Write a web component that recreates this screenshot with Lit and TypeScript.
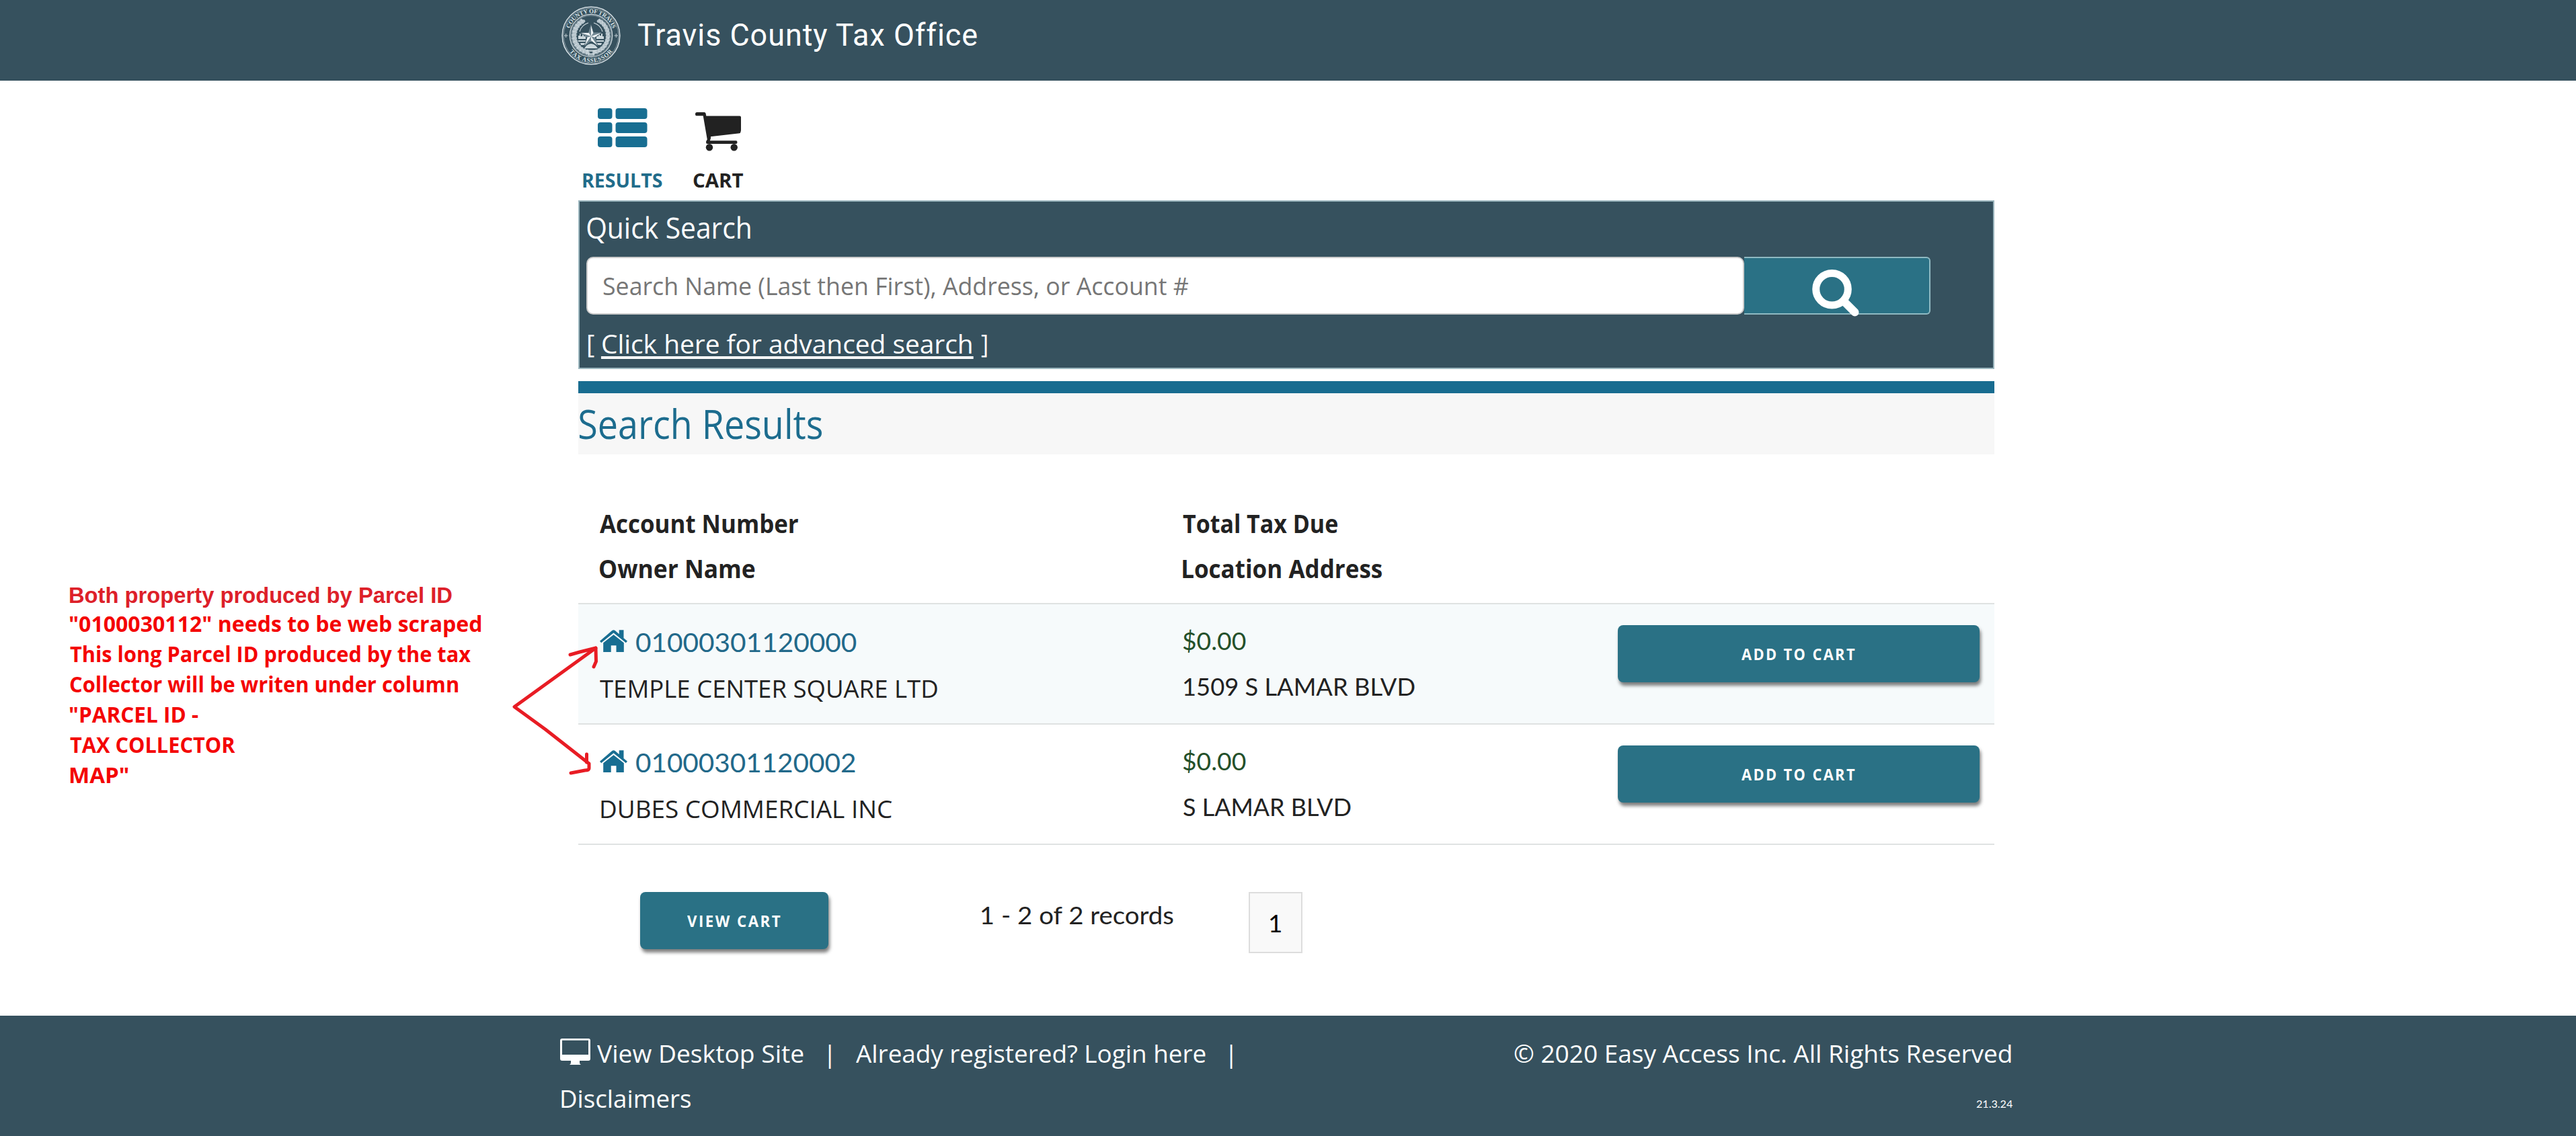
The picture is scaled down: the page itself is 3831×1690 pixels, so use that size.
import { LitElement, html, css, svg } from "lit";
import { customElement, property, query, state } from "lit/decorators.js";
import { styleMap } from "lit/directives/style-map.js";

/** One line of text whose visible ink spans exactly `width` pixels. */
@customElement("fit-text")
class FitText extends LitElement {
  @property() text = "";
  @property({ type: Number }) width = 100;
  @property({ type: Boolean, reflect: true }) underlined = false;
  @state() private scale = 1;
  @state() private shift = 0;
  @query(".run") private run!: HTMLElement;

  static styles = css`
    :host { display: block; flex: none; white-space: nowrap; }
    .run { display: inline-block; vertical-align: top; transform-origin: 0 0; }
    :host([underlined]) .run {
      text-decoration: underline;
      text-decoration-thickness: 4px;
      text-underline-offset: 4px;
      text-decoration-skip-ink: none;
    }
  `;

  firstUpdated() {
    const cs = getComputedStyle(this.run);
    const ctx = document.createElement("canvas").getContext("2d")!;
    ctx.font = `${cs.fontWeight} ${cs.fontSize} ${cs.fontFamily}`;
    if (cs.letterSpacing !== "normal") (ctx as any).letterSpacing = cs.letterSpacing;
    const m = ctx.measureText(this.text);
    const tracking = parseFloat(cs.letterSpacing) || 0;
    // Side bearings come from the canvas, the advance from the laid-out run.
    const advance = this.run.offsetWidth ? this.run.getBoundingClientRect().width / this.scale : m.width;
    const rightBearing = Math.max(m.width - m.actualBoundingBoxRight, tracking);
    const ink = advance - rightBearing + m.actualBoundingBoxLeft;
    this.scale = this.width / ink;
    this.shift = m.actualBoundingBoxLeft * this.scale;
  }

  render() {
    const box = { display: "block", width: `${this.width}px` };
    const fit = { transform: `translateX(${this.shift}px) scaleX(${this.scale})` };
    return html`<span style=${styleMap(box)}><span class="run" style=${styleMap(fit)}>${this.text}</span></span>`;
  }
}

const fit = (cls: string, text: string, width: number) =>
  html`<fit-text class=${cls} .text=${text} .width=${width}></fit-text>`;

const leaves = (side: 1 | -1) =>
  Array.from({ length: 13 }, (_, i) => {
    const a = ((-58 + i * 11.2) * Math.PI) / 180;
    const x = 44 + side * Math.cos(a) * 25.2;
    const y = 44 + Math.sin(a) * 25.2;
    const rot = (a * 180) / Math.PI * side + (side === 1 ? 60 : 120);
    return svg`<ellipse cx=${x} cy=${y} rx="4.6" ry="2.5" transform="rotate(${rot} ${x} ${y})"/>
      <ellipse cx=${x} cy=${y} rx="4" ry="2" transform="rotate(${rot + 65} ${x} ${y})"/>`;
  });

const seal = html`<svg class="seal" viewBox="0 0 88 88">
  <g fill="none" stroke="#d3dde2">
    <circle cx="44" cy="44" r="42.8" stroke-width="1.6"/>
    <circle cx="44" cy="44" r="40.8" stroke-width=".5"/>
    <circle cx="44" cy="44" r="31.6" stroke-width="1.3"/>
    <circle cx="44" cy="44" r="30" stroke-width=".5"/>
    <path d="M27 38Q30 28 40 25M61 38Q58 28 48 25" stroke-width="1.1"/>
  </g>
  <g fill="#c6d2d8" stroke="#8b9fa9" stroke-width=".4">${leaves(1)}${leaves(-1)}</g>
  <g fill="#cbd7dc">
    <path d="M25 49V44H27V41H28.500V45H31V42H33V45H36V49ZM63 49V45H61V41H59V44H57V42H55V45H52V49ZM25 51H63V53H25Z"/>
    <path d="M28 55H38L33 58H29ZM60 55H50L55 58H59ZM37 59Q44 53 51 59L54 63H34Z"/>
    <path d="M37 65H51V68H37ZM39 70H49V74H39Z" opacity=".75"/>
  </g>
  <path d="M44 27L47.700 39.500H60L50 46.700L54 59.500L44 51.700L34 59.500L38 46.700L28 39.500H40.300Z" fill="#eef3f5" stroke="#36515e" stroke-width=".8"/>
  <path d="M44 45V27L40.300 39.500ZM44 45L28 39.500L38 46.700ZM44 45L34 59.500L44 51.700ZM44 45L54 59.500L50 46.700ZM44 45L60 39.500H47.700Z" fill="#718792"/>
  <path d="M4 44H9.500M6.700 41V47M78.500 44H84M81.300 41V47" stroke="#c3d0d6" stroke-width="1"/>
  <defs>
    <path id="arcTop" d="M10.500 44A33.500 33.500 0 0 1 77.500 44"/>
    <path id="arcBottom" d="M4.300 44A39.700 39.700 0 0 0 83.700 44"/>
  </defs>
  <g fill="#dbe4e8" font-family="Liberation Serif, serif" font-weight="700" text-anchor="middle">
    <text font-size="9" textLength="84"><textPath href="#arcTop" startOffset="50%" textLength="84">COUNTY OF TRAVIS</textPath></text>
    <text font-size="9" textLength="74"><textPath href="#arcBottom" startOffset="50%" textLength="74">TAX ASSESSOR</textPath></text>
  </g>
</svg>`;

const listIcon = html`<svg class="list-icon" viewBox="0 0 74 58">
  ${[0, 21, 42].map((y) => svg`<rect x="0" y=${y} width="21.500" height="16" rx="4"/><rect x="26.500" y=${y} width="47" height="16" rx="4"/>`)}
</svg>`;

const cartIcon = html`<svg class="cart-icon" viewBox="0 0 68 58">
  <path d="M2.500 0H13.500Q15 0 15.500 1.500L16.300 5.500H66Q68 5.500 68 7.500V24Q68 31 66 31.300V25L22.500 31L23 36.300Q23.500 39.500 21.800 42.300H60.500Q62.500 42.300 62.500 44.700T60.500 47H18Q16 47 16 44.500Q16 43 17.800 40.500L11.700 5.300H2.500Q0 5.300 0 2.700T2.500 0Z"/>
  <path d="M14 10H68V24.500Q68 26.300 66 31.300L22.500 36.300L18 28Z"/>
  <circle cx="21" cy="52.300" r="5.200"/><circle cx="57.700" cy="52.300" r="5.200"/>
</svg>`;

const houseIcon = html`<svg class="house" viewBox="0 0 41 33">
  <path d="M0 16.800L18.300 1Q20.500 -.7 22.700 1L28.700 6.300V.3H35.500V12.200L41 16.800L38.800 19.200L20.500 4.600L2.200 19.200Z"/>
  <path d="M5.200 19.300L20.500 7.200L35.800 19.300V33H24.500V23.300H16.700V33H5.200Z"/>
</svg>`;

const searchIcon = html`<svg class="search-icon" viewBox="0 0 70 70">
  <circle cx="29.500" cy="29.300" r="23.800" fill="none" stroke="#fff" stroke-width="11"/>
  <path d="M48 48L63.500 63.500" stroke="#fff" stroke-width="12" stroke-linecap="round"/>
</svg>`;

const monitorIcon = html`<svg class="monitor" viewBox="0 0 45 39">
  <path fill-rule="evenodd" d="M3 0H42Q45 0 45 3V30Q45 33 42 33H29V36Q29 38 31 39H14Q16 38 16 36V33H3Q0 33 0 30V3Q0 0 3 0ZM3 2.800V24H42V2.800Z"/>
</svg>`;

const records = [
  { account: "01000301120000", aw: 327.5, owner: "TEMPLE CENTER SQUARE LTD", ow: 502, indent: 0, place: "1509 S LAMAR BLVD", pw: 343, pi: 2 },
  { account: "01000301120002", aw: 325.5, owner: "DUBES COMMERCIAL INC", ow: 433, indent: 2, place: "S LAMAR BLVD", pw: 249, pi: 1 },
];

const notes: [string, number][] = [
  ["\"0100030112\" needs to be web scraped", 611.5],
  ["This long Parcel ID produced by the tax", 596],
  ["Collector will be writen under column", 577.5],
  ["\"PARCEL ID -", 191],
  ["TAX COLLECTOR", 245.5],
  ["MAP\"", 86.5],
];

@customElement("app-root")
class AppRoot extends LitElement {
  static styles = css`
    :host {
      display: block; position: relative; width: 3831px; height: 1690px; overflow: hidden;
      background: #fff; color: #222; font-family: "Open Sans", "Liberation Sans", sans-serif;
      font-size: 36.8px; line-height: 44px;
    }
    svg { display: block; flex: none; }
    .lato { font-family: Lato, "Liberation Sans", sans-serif; }
    header { height: 120px; background: #36515e; display: flex; align-items: flex-start; padding-left: 835px; box-sizing: border-box; color: #fff; }
    .seal { width: 88px; height: 88px; margin-top: 9px; }
    .title { font: 400 45.5px/54px Roboto, sans-serif; letter-spacing: 1px; margin: 25.5px 0 0 25.5px; }
    main { width: 2106px; height: 1391px; margin-left: 860px; }
    nav { height: 178px; box-sizing: border-box; padding: 41px 0 0 7px; display: flex; gap: 46px; }
    .tab { display: flex; flex-direction: column; align-items: center; }
    .glyph { height: 89px; }
    .list-icon { width: 74px; height: 58px; fill: #186e92; }
    .cart-icon { width: 68px; height: 58px; margin-top: 6px; fill: #222; }
    .label { font-size: 28.8px; line-height: 36px; font-weight: 700; }
    .on { color: #216c8a; }
    .panel { height: 251px; box-sizing: border-box; border: 2px solid #9bb6be; background: #36515e; color: #fff; padding: 12px 0 0 9.5px; }
    .quick { font-size: 44px; line-height: 52px; margin-left: 1.5px; }
    .field { display: flex; margin-top: 18px; height: 86px; }
    .input { width: 1722.5px; box-sizing: border-box; background: #fff; border: 2px solid #ccc; border-radius: 10px; padding: 18.800px 0 0 23.5px; color: #767676; }
    .go { width: 277px; box-sizing: border-box; background: #2a7185; border: 2px solid #8fb9c2; border-left: 0; border-radius: 0 6px 6px 0; padding: 17px 0 0 101px; }
    .search-icon { width: 70px; height: 70px; }
    .adv { display: flex; margin: 20.500px 0 0 3px; font-size: 37.6px; line-height: 46px; }
    .adv .link { margin: 0 14.5px 0 12.500px; }
    .heading { margin-top: 18px; height: 109px; box-sizing: border-box; border-top: 18px solid #186c90; background: #f7f7f7; padding: 10px 0 0 1.5px; color: #1c6c8e; }
    .h1 { font-size: 60px; line-height: 70px; }
    .row { display: grid; grid-template-columns: 866.5px 647.5px 538px; padding-left: 32px; box-sizing: border-box; }
    .head { height: 221px; padding-top: 80.5px; font-weight: 700; }
    .cell { display: flex; flex-direction: column; gap: 23.5px; }
    .record { height: 179px; border-top: 2px solid #dfe2e2; }
    .record.odd { background: #f6fafb; }
    .acct { display: flex; gap: 12.5px; padding-top: 31.5px; color: #22698a; font-size: 39.3px; line-height: 48px; }
    .house { width: 41px; height: 33px; margin-top: 6.5px; fill: #186e92; }
    .due { color: #24502a; margin: 32.400px 0 0 .5px; }
    .btn { background: #2a7185; color: #fff; border-radius: 8px; height: 85px; display: flex; justify-content: center; align-items: center; box-shadow: 2px 5px 5px rgba(0,0,0,.5); }
    .btn .cap { font-size: 22.5px; line-height: 28px; font-weight: 700; letter-spacing: 2.5px; margin: 3px 2px 0 0; }
    .add { margin-top: 31px; }
    .pager { display: flex; align-items: flex-start; padding: 70px 0 0 91.5px; border-top: 2px solid #dfe2e2; }
    .view { width: 280.5px; }
    .count { margin: 12px 0 0 228px; }
    .page { margin-left: 112px; width: 80px; height: 91px; box-sizing: border-box; border: 2.500px solid #ddd; background: #f9f9f9; color: #000; display: flex; justify-content: center; padding-top: 21.5px; }
    footer { height: 179px; box-sizing: border-box; background: #36515e; color: #fff; padding: 34px 838px 0 833px; display: flex; justify-content: space-between; align-items: flex-start; }
    .left { display: flex; flex-direction: column; gap: 23px; }
    .links { display: flex; }
    .monitor { width: 45px; height: 39px; fill: #fff; margin-right: 10px; }
    .bar { margin: 0 37px; }
    .disc { margin-left: 2px; }
    .right { display: flex; flex-direction: column; align-items: flex-end; }
    .copy { margin-right: 2px; }
    .ver { font-size: 16px; line-height: 20px; margin-top: 42.500px; }
    .note { position: absolute; left: 104px; top: 866.5px; color: #f40404; font-weight: 700; font-size: 31.500px; line-height: 45.1px; }
    .note .first { font: 700 32.5px/38px "Liberation Sans", Arial, sans-serif; color: #dd2029; }
    .arrows { position: absolute; left: 755px; top: 955px; width: 140px; height: 205px; fill: none; stroke: #e81c24; stroke-width: 5; stroke-linejoin: round; stroke-linecap: round; }
  `;

  render() {
    return html`
      <header>${seal}${fit("title", "Travis County Tax Office", 504)}</header>
      <main>
        <nav>
          <div class="tab on"><div class="glyph">${listIcon}</div>${fit("label", "RESULTS", 117.5)}</div>
          <div class="tab"><div class="glyph">${cartIcon}</div>${fit("label", "CART", 74.5)}</div>
        </nav>
        <section class="panel">
          ${fit("quick", "Quick Search", 243)}
          <div class="field">
            <div class="input">${fit("", "Search Name (Last then First), Address, or Account #", 870)}</div>
            <div class="go">${searchIcon}</div>
          </div>
          <div class="adv">
            ${fit("", "[", 9)}
            <fit-text class="link" underlined .text=${"Click here for advanced search"} .width=${548.5}></fit-text>
            ${fit("", "]", 9)}
          </div>
        </section>
        <div class="heading">${fit("h1", "Search Results", 360)}</div>
        <div class="row head">
          <div class="cell">${fit("", "Account Number", 295)}${fit("", "Owner Name", 231)}</div>
          <div class="cell">${fit("", "Total Tax Due", 230.5)}${fit("", "Location Address", 296)}</div>
        </div>
        ${records.map((r, i) => html`
          <div class="row record ${i % 2 ? "" : "odd"}">
            <div class="cell">
              <div class="acct">${houseIcon}${fit("lato", r.account, r.aw)}</div>
              <div style=${styleMap({ paddingLeft: `${r.indent}px` })}>${fit("", r.owner, r.ow)}</div>
            </div>
            <div class="cell">
              ${fit("due lato", "$0.00", 94)}
              <div style=${styleMap({ paddingLeft: `${r.pi}px` })}>${fit("lato", r.place, r.pw)}</div>
            </div>
            <div><div class="btn add">${fit("cap", "ADD TO CART", 168.5)}</div></div>
          </div>`)}
        <div class="pager">
          <div class="btn view">${fit("cap", "VIEW CART", 138.5)}</div>
          ${fit("count lato", "1 - 2 of 2 records", 285)}
          <div class="page">${fit("lato", "1", 16)}</div>
        </div>
      </main>
      <footer>
        <div class="left">
          <div class="links">
            ${monitorIcon}${fit("", "View Desktop Site", 306.5)}
            ${fit("bar", "|", 4)}${fit("", "Already registered? Login here", 519.5)}${fit("bar", "|", 4)}
          </div>
          ${fit("disc", "Disclaimers", 192)}
        </div>
        <div class="right">
          ${fit("copy", "© 2020 Easy Access Inc. All Rights Reserved", 739)}
          ${fit("ver lato", "21.3.24", 54)}
        </div>
      </footer>
      <aside class="note">
        ${fit("first", "Both property produced by Parcel ID", 568.5)}
        ${notes.map(([t, w]) => fit("", t, w))}
      </aside>
      <svg class="arrows" viewBox="755 955 140 205">
        <path d="M848 974L862 970L886 964L765 1051.500L811 1085L876 1136V1143Q876 1146 870 1146L849 1150"/>
        <path d="M886 964L886.500 984L883 992M872.500 1122V1134"/>
      </svg>
    `;
  }
}
